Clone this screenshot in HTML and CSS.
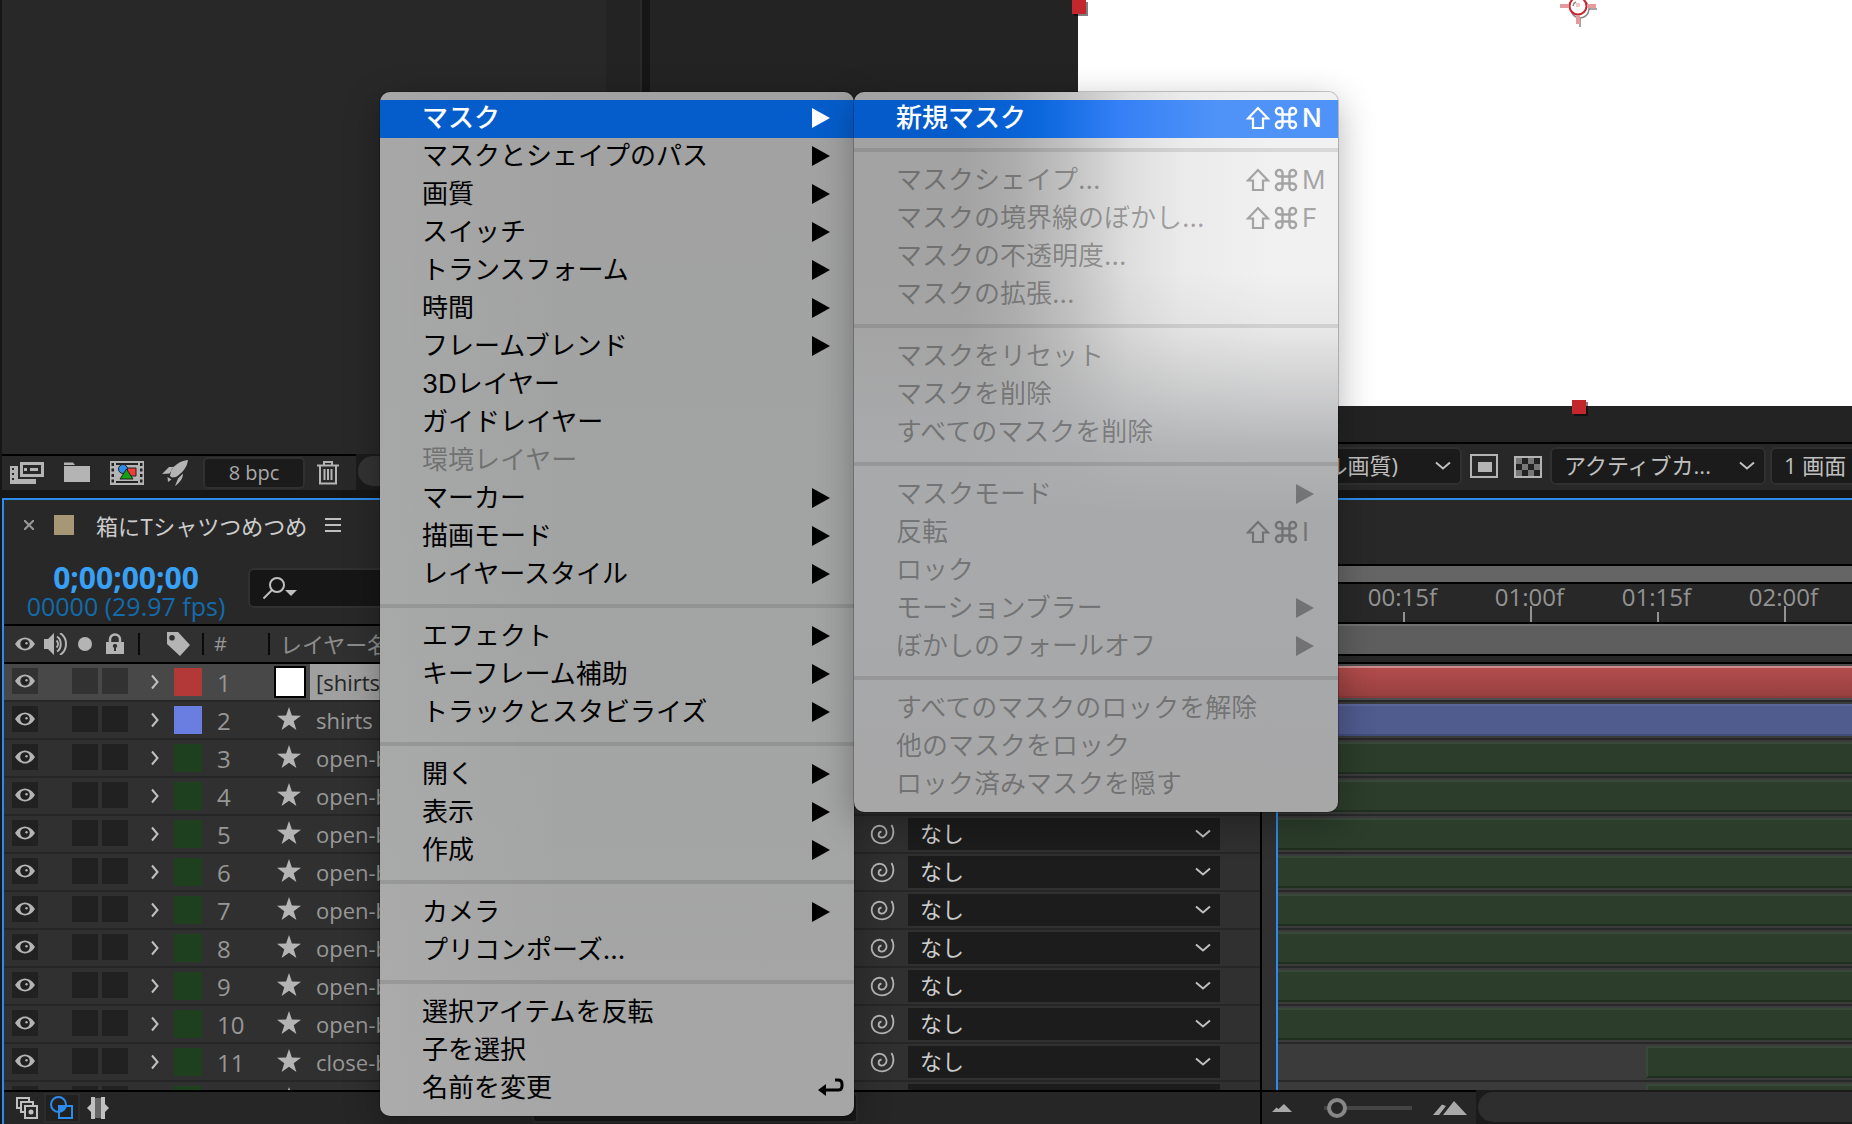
FILE: index.html
```html
<!DOCTYPE html>
<html lang="ja">
<head>
<meta charset="utf-8">
<title>箱にTシャツつめつめ</title>
<link rel="stylesheet" href="styles.css">
</head>
<body>
<svg class="defs" aria-hidden="true">
  <symbol id="eye" viewBox="0 0 22 14"><path fill="currentColor" fill-rule="evenodd" d="M1 7C4 2.500 7.500.5 11 .5S18 2.500 21 7c-3 4.500-6.500 6.500-10 6.500S4 11.500 1 7zm10-4.800a4.800 4.800 0 1 0 0 9.600 4.800 4.800 0 0 0 0-9.600z"/><circle cx="11" cy="7" r="3.400" fill="#202020"/><circle cx="12.500" cy="6.200" r="1.200" fill="currentColor"/></symbol>
  <symbol id="twirl" viewBox="0 0 10 16"><path d="M2 1.500 7.500 8 2 14.500" fill="none" stroke="currentColor" stroke-width="2"/></symbol>
  <symbol id="star" viewBox="0 0 24 24"><path fill="currentColor" d="M12 0l2.900 8.600L24 8.700l-7.300 5.500 2.700 8.800L12 17.700 4.600 23l2.700-8.800L0 8.700l9.100-.1z"/></symbol>
  <symbol id="whip" viewBox="0 0 26 22"><path d="M11.500 8.500c-3.500.5-4 5.500-.5 6 4.500.5 6.500-4 5-7.500C14 2 7.500 1.500 4 5c-4 4.500-2.500 11.500 2.500 14 6 3 13.500.5 16-5.500 1.500-4 1-8-1-11.500" fill="none" stroke="currentColor" stroke-width="1.800"/></symbol>
  <symbol id="next" viewBox="0 0 18 20"><path fill="currentColor" d="M0 0l18 10L0 20z"/></symbol>
  <symbol id="shift" viewBox="0 0 24 24"><path d="M12 2 2 12.500h5V22h10v-9.500h5z" fill="none" stroke="currentColor" stroke-width="2.200"/></symbol>
  <symbol id="cmd" viewBox="0 0 24 24"><path d="M8.500 8.500V5.300A3.300 3.300 0 1 0 5.200 8.500h13.600a3.300 3.300 0 1 0-3.300-3.200v13.400a3.300 3.300 0 1 0 3.300-3.200H5.200a3.300 3.300 0 1 0 3.300 3.200z" fill="none" stroke="currentColor" stroke-width="2.400"/></symbol>
</svg>

<div class="app">
  <div class="workspace">
    <section class="project" aria-label="プロジェクト">
      <div class="project-list"></div>
      <footer class="project-bar">
        <div class="project-tools">
          <button class="tool" aria-label="フッテージを変換"><svg width="34" height="24" viewBox="0 0 34 24"><path fill="#b4b4b4" fill-rule="evenodd" d="M10 1h24v15H10zm3 3v9h18V4zM14 7h3v3h-3zm6 0h8v3h-8zM0 5h8v13h18v5H0zm2 2v2h2V7zm0 5v2h2v-2zm0 5v2h2v-2z"/></svg></button>
          <button class="tool" aria-label="新規フォルダー"><svg width="26" height="24" viewBox="0 0 26 24"><path fill="#b4b4b4" d="M0 1.500h9L11 4H0zM0 5h26v16H0z"/></svg></button>
          <button class="tool film" aria-label="新規コンポジション"><svg width="34" height="24" viewBox="0 0 34 24"><path fill="#b4b4b4" d="M0 0h34v24H0z"/><path fill="#222" d="M1.500 2h2.500v3H1.500zm0 5.500h2.500v3H1.500zm0 5.500h2.500v3H1.500zm0 5.500h2.500v3H1.500zM30 2h2.500v3H30zm0 5.500h2.500v3H30zm0 5.500h2.500v3H30zm0 5.500h2.500v3H30zM6 2h22v2H6zm0 18h22v2H6z"/><path fill="#f33a3a" stroke="#222" d="M17 7h9v8h-9z"/><circle cx="13" cy="8" r="4.500" fill="#2d8ceb" stroke="#222"/><path fill="#13a013" stroke="#222" d="M16.500 8 23 18H10z"/></svg></button>
          <button class="tool rocket" aria-label="プロジェクト設定"><svg width="28" height="26" viewBox="0 0 28 26"><path fill="#b4b4b4" d="M27 0C19 1 13 5 10 11l-1 5 2 1.500 4-.5c6-4 11-9 12-17zM8 7c3 0 4 0 5-.500L8.500 13.500 1 14zm9 11.500 5-5c0 5-3 9-8 12.500zM6.500 17l4 2.500L7 22z"/></svg></button>
          <button class="depth">8 bpc</button>
          <button class="tool" aria-label="削除"><svg width="22" height="24" viewBox="0 0 22 24"><path d="M0 4.500h22M7 4V1h8v3M3 5v17.500h16V5M7.500 8v11M11 8v11M14.500 8v11" fill="none" stroke="#b4b4b4" stroke-width="2"/></svg></button>
        </div>
        <div class="project-scroll"><div class="thumb"></div></div>
      </footer>
    </section>

    <section class="viewer" aria-label="コンポジション">
      <div class="stage">
        <div class="canvas">
          <svg class="anchor" width="40" height="32" viewBox="0 0 40 32"><g fill="none" stroke="#888" stroke-width="1.500"><circle cx="22" cy="11" r="9"/><path d="M22 20v9M31 11h8"/></g><circle cx="20" cy="8" r="8.500" fill="#fff" stroke="#c8262d" stroke-width="2"/><path fill="#e59a9d" d="M18 17h4v9h-4zM2 6h9v4H2zm27 0h9v4h-9z"/><path fill="#f2c6c8" d="M18 5h4v4h-4z"/><path d="M15 8a5 5 0 0 1 3-4" fill="none" stroke="#888" stroke-width="1.500"/></svg>
          <span class="handle corner"></span>
          <span class="handle bottom"></span>
        </div>
      </div>
      <footer class="viewer-bar">
        <select class="box quality" aria-label="解像度"><option>(フル画質)</option></select>
        <button class="tool" aria-label="目標範囲"><svg width="28" height="24" viewBox="0 0 28 24"><path d="M1 1h26v22H1z" fill="none" stroke="#b4b4b4" stroke-width="2"/><path fill="#b4b4b4" d="M8 8h14v10H8z"/></svg></button>
        <button class="tool" aria-label="透明グリッド"><svg width="28" height="24" viewBox="0 0 28 24"><path d="M1 3h26v20H1z" fill="#222" stroke="#b4b4b4" stroke-width="2"/><path fill="#777" d="M2 4h6v6H2zm12 0h6v6h-6zM8 10h6v6H8zm12 0h6v6h-6zM2 16h6v6H2zm12 0h6v6h-6z"/></svg></button>
        <select class="box camera" aria-label="3Dビュー"><option>アクティブカ...</option></select>
        <select class="box views" aria-label="ビューレイアウト"><option>1 画面</option></select>
      </footer>
    </section>
  </div>

  <section class="timeline" aria-label="タイムライン">
    <div class="layers">
      <header class="comp-tab">
        <button class="tool" aria-label="閉じる"><svg width="10" height="10" viewBox="0 0 10 10"><path d="M0 0l10 10M10 0 0 10" stroke="#999" stroke-width="2"/></svg></button>
        <span class="comp-color"></span>
        <h1>箱にTシャツつめつめ</h1>
        <button class="tool" aria-label="パネルメニュー"><svg width="16" height="14" viewBox="0 0 16 14"><path d="M0 1h16M0 7h16M0 13h16" stroke="#c0c0c0" stroke-width="2"/></svg></button>
      </header>
      <div class="time-row">
        <div class="timecode"><strong>0;00;00;00</strong><span>00000 (29.97 fps)</span></div>
        <label class="search"><svg width="36" height="24" viewBox="0 0 36 24"><g fill="none" stroke="#c0c0c0" stroke-width="2"><circle cx="15" cy="9" r="7"/><path d="M10 14l-8.500 8.500"/></g><path fill="#c0c0c0" d="M23 14h12l-6 6z"/></svg><input type="search" aria-label="レイヤーを検索"></label>
      </div>
      <div class="layer-scroll">
      <table>
        <colgroup><col class="c-av"><col class="c-label"><col class="c-num"><col class="c-name"><col class="c-parent"></colgroup>
        <thead><tr>
          <th><div class="av"><svg width="22" height="14"><use href="#eye"/></svg><svg width="24" height="22" viewBox="0 0 24 22"><path fill="#b4b4b4" d="M0 6h4l6-6v22l-6-6H0z"/><path d="M12.500 7.500c2 2 2 5 0 7M13 3.500c5 3 5 12 0 15M16 0c8 5 8 17 0 22" fill="none" stroke="#b4b4b4" stroke-width="2"/></svg><svg width="14" height="14"><circle cx="7" cy="7" r="7" fill="#b4b4b4"/></svg><svg width="20" height="22" viewBox="0 0 20 22"><path d="M5 10V6.500a5 5 0 0 1 10 0V10" fill="none" stroke="#b4b4b4" stroke-width="2.500"/><path fill="#b4b4b4" d="M1 9h18v12H1z"/><path fill="#303030" d="M10 11a2 2 0 0 1 1 3.800V18H9v-3.200A2 2 0 0 1 10 11z"/></svg></div></th>
          <th><svg class="tag" width="24" height="24" viewBox="0 0 24 24"><path fill="#b4b4b4" fill-rule="evenodd" d="M1 0h11l12 13-10 11L1 12zm5 3a2.800 2.800 0 1 0 0 5.600A2.800 2.800 0 0 0 6 3z"/></svg></th>
          <th class="num">#</th>
          <th class="name-head">レイヤー名</th>
          <th></th>
        </tr></thead>
        <tbody>
          <tr class="selected"><td><div class="av"><i><svg width="22" height="14"><use href="#eye"/></svg></i><b></b><i></i><i></i></div></td><td><div class="label"><svg width="10" height="16"><use href="#twirl"/></svg><span class="chip red"></span></div></td><td class="num">1</td><td><div class="name"><span class="solid"></span><span class="edit">[shirts]</span></div></td><td></td></tr>
          <tr><td><div class="av"><i><svg width="22" height="14"><use href="#eye"/></svg></i><b></b><i></i><i></i></div></td><td><div class="label"><svg width="10" height="16"><use href="#twirl"/></svg><span class="chip blue"></span></div></td><td class="num">2</td><td><div class="name"><svg width="24" height="24"><use href="#star"/></svg><span>shirts</span></div></td><td></td></tr>
          <tr><td><div class="av"><i><svg width="22" height="14"><use href="#eye"/></svg></i><b></b><i></i><i></i></div></td><td><div class="label"><svg width="10" height="16"><use href="#twirl"/></svg><span class="chip"></span></div></td><td class="num">3</td><td><div class="name"><svg width="24" height="24"><use href="#star"/></svg><span>open-box</span></div></td><td></td></tr>
          <tr><td><div class="av"><i><svg width="22" height="14"><use href="#eye"/></svg></i><b></b><i></i><i></i></div></td><td><div class="label"><svg width="10" height="16"><use href="#twirl"/></svg><span class="chip"></span></div></td><td class="num">4</td><td><div class="name"><svg width="24" height="24"><use href="#star"/></svg><span>open-box</span></div></td><td></td></tr>
          <tr><td><div class="av"><i><svg width="22" height="14"><use href="#eye"/></svg></i><b></b><i></i><i></i></div></td><td><div class="label"><svg width="10" height="16"><use href="#twirl"/></svg><span class="chip"></span></div></td><td class="num">5</td><td><div class="name"><svg width="24" height="24"><use href="#star"/></svg><span>open-box</span></div></td><td><div class="parent"><svg width="26" height="22"><use href="#whip"/></svg><select aria-label="親 5"><option>なし</option></select></div></td></tr>
          <tr><td><div class="av"><i><svg width="22" height="14"><use href="#eye"/></svg></i><b></b><i></i><i></i></div></td><td><div class="label"><svg width="10" height="16"><use href="#twirl"/></svg><span class="chip"></span></div></td><td class="num">6</td><td><div class="name"><svg width="24" height="24"><use href="#star"/></svg><span>open-box</span></div></td><td><div class="parent"><svg width="26" height="22"><use href="#whip"/></svg><select aria-label="親 6"><option>なし</option></select></div></td></tr>
          <tr><td><div class="av"><i><svg width="22" height="14"><use href="#eye"/></svg></i><b></b><i></i><i></i></div></td><td><div class="label"><svg width="10" height="16"><use href="#twirl"/></svg><span class="chip"></span></div></td><td class="num">7</td><td><div class="name"><svg width="24" height="24"><use href="#star"/></svg><span>open-box</span></div></td><td><div class="parent"><svg width="26" height="22"><use href="#whip"/></svg><select aria-label="親 7"><option>なし</option></select></div></td></tr>
          <tr><td><div class="av"><i><svg width="22" height="14"><use href="#eye"/></svg></i><b></b><i></i><i></i></div></td><td><div class="label"><svg width="10" height="16"><use href="#twirl"/></svg><span class="chip"></span></div></td><td class="num">8</td><td><div class="name"><svg width="24" height="24"><use href="#star"/></svg><span>open-box</span></div></td><td><div class="parent"><svg width="26" height="22"><use href="#whip"/></svg><select aria-label="親 8"><option>なし</option></select></div></td></tr>
          <tr><td><div class="av"><i><svg width="22" height="14"><use href="#eye"/></svg></i><b></b><i></i><i></i></div></td><td><div class="label"><svg width="10" height="16"><use href="#twirl"/></svg><span class="chip"></span></div></td><td class="num">9</td><td><div class="name"><svg width="24" height="24"><use href="#star"/></svg><span>open-box</span></div></td><td><div class="parent"><svg width="26" height="22"><use href="#whip"/></svg><select aria-label="親 9"><option>なし</option></select></div></td></tr>
          <tr><td><div class="av"><i><svg width="22" height="14"><use href="#eye"/></svg></i><b></b><i></i><i></i></div></td><td><div class="label"><svg width="10" height="16"><use href="#twirl"/></svg><span class="chip"></span></div></td><td class="num">10</td><td><div class="name"><svg width="24" height="24"><use href="#star"/></svg><span>open-box</span></div></td><td><div class="parent"><svg width="26" height="22"><use href="#whip"/></svg><select aria-label="親 10"><option>なし</option></select></div></td></tr>
          <tr><td><div class="av"><i><svg width="22" height="14"><use href="#eye"/></svg></i><b></b><i></i><i></i></div></td><td><div class="label"><svg width="10" height="16"><use href="#twirl"/></svg><span class="chip"></span></div></td><td class="num">11</td><td><div class="name"><svg width="24" height="24"><use href="#star"/></svg><span>close-box</span></div></td><td><div class="parent"><svg width="26" height="22"><use href="#whip"/></svg><select aria-label="親 11"><option>なし</option></select></div></td></tr>
          <tr><td><div class="av"><i></i><b></b><i></i><i></i></div></td><td><div class="label"><svg width="10" height="16"></svg><span class="chip"></span></div></td><td class="num"></td><td><div class="name"><svg width="24" height="24"><use href="#star"/></svg></div></td><td><div class="parent"><svg width="26" height="22"><use href="#whip"/></svg><select aria-label="親 12"><option></option></select></div></td></tr>
        </tbody>
      </table>
      </div>
      <footer class="layer-foot">
        <button class="tool" aria-label="レイヤースイッチ"><svg width="22" height="22" viewBox="0 0 22 22"><path d="M4 11H1V1h12v3M8 15H5V5h12v3M9 9h12v12H9z" fill="none" stroke="#c0c0c0" stroke-width="2"/><circle cx="15" cy="15" r="2.500" fill="#c0c0c0"/></svg></button>
        <button class="tool on" aria-label="転送制御"><svg width="24" height="24" viewBox="0 0 24 24"><circle cx="8.500" cy="8.500" r="7.500" fill="none" stroke="#2d8ceb" stroke-width="2"/><path d="M9 10h13v12H9z" fill="none" stroke="#2d8ceb" stroke-width="2"/><path fill="#2d8ceb" d="M9 10h7a8 8 0 0 1-7 6z"/></svg></button>
        <button class="tool" aria-label="イン・アウト"><svg width="24" height="24" viewBox="0 0 24 24"><path fill="#666" d="M8 2h8v20H8z"/><path fill="#c0c0c0" d="M5 1h4v22H5v-7l-4-4 4-4zM15 1h4v7l4 4-4 4v7h-4z"/></svg></button>
        <button class="mode" aria-label="スイッチ / モード"></button>
      </footer>
    </div>

    <div class="graph">
      <div class="nav-space"></div>
      <div class="navigator"></div>
      <ol class="ruler"><li>00:15f</li><li class="sec">01:00f</li><li>01:15f</li><li class="sec">02:00f</li></ol>
      <div class="workarea"></div>
      <div class="cache"></div>
      <div class="tracks">
        <div class="track sel"><span class="bar red"></span></div>
        <div class="track"><span class="bar blue"></span></div>
        <div class="track"><span class="bar"></span></div>
        <div class="track"><span class="bar"></span></div>
        <div class="track"><span class="bar"></span></div>
        <div class="track"><span class="bar"></span></div>
        <div class="track"><span class="bar"></span></div>
        <div class="track"><span class="bar"></span></div>
        <div class="track"><span class="bar"></span></div>
        <div class="track"><span class="bar"></span></div>
        <div class="track"><span class="bar late"></span></div>
        <div class="track"><span class="bar late"></span></div>
        <span class="playhead"></span>
      </div>
      <footer class="zoom-foot">
        <div class="zoomer">
          <svg width="20" height="8" viewBox="0 0 20 8"><path fill="#a9a9a9" d="M0 8l4.500-4.500 2 1.500L12 0l8 8z"/></svg>
          <input type="range" min="0" max="100" value="4" aria-label="ズーム">
          <svg width="34" height="14" viewBox="0 0 34 14"><path fill="#a9a9a9" d="M0 14 9 3.500l4 1.500-7 9zM10 14 21 0l13 14z"/></svg>
        </div>
        <div class="hscroll"><div class="thumb"></div></div>
      </footer>
    </div>
  </section>
</div>

<div class="menus">
  <ul class="menu" role="menu">
    <li><button class="active" role="menuitem">マスク<svg><use href="#next"/></svg></button></li>
    <li><button role="menuitem">マスクとシェイプのパス<svg><use href="#next"/></svg></button></li>
    <li><button role="menuitem">画質<svg><use href="#next"/></svg></button></li>
    <li><button role="menuitem">スイッチ<svg><use href="#next"/></svg></button></li>
    <li><button role="menuitem">トランスフォーム<svg><use href="#next"/></svg></button></li>
    <li><button role="menuitem">時間<svg><use href="#next"/></svg></button></li>
    <li><button role="menuitem">フレームブレンド<svg><use href="#next"/></svg></button></li>
    <li><button role="menuitem">3Dレイヤー</button></li>
    <li><button role="menuitem">ガイドレイヤー</button></li>
    <li><button role="menuitem" disabled>環境レイヤー</button></li>
    <li><button role="menuitem">マーカー<svg><use href="#next"/></svg></button></li>
    <li><button role="menuitem">描画モード<svg><use href="#next"/></svg></button></li>
    <li><button role="menuitem">レイヤースタイル<svg><use href="#next"/></svg></button></li>
    <li class="sep" role="separator"></li>
    <li><button role="menuitem">エフェクト<svg><use href="#next"/></svg></button></li>
    <li><button role="menuitem">キーフレーム補助<svg><use href="#next"/></svg></button></li>
    <li><button role="menuitem">トラックとスタビライズ<svg><use href="#next"/></svg></button></li>
    <li class="sep" role="separator"></li>
    <li><button role="menuitem">開く<svg><use href="#next"/></svg></button></li>
    <li><button role="menuitem">表示<svg><use href="#next"/></svg></button></li>
    <li><button role="menuitem">作成<svg><use href="#next"/></svg></button></li>
    <li class="sep" role="separator"></li>
    <li><button role="menuitem">カメラ<svg><use href="#next"/></svg></button></li>
    <li><button role="menuitem">プリコンポーズ...</button></li>
    <li class="sep" role="separator"></li>
    <li><button role="menuitem">選択アイテムを反転</button></li>
    <li><button role="menuitem">子を選択</button></li>
    <li><button class="enter" role="menuitem">名前を変更<svg viewBox="0 0 26 20"><path d="M6 12h14q4 0 4-4V6q0-4-4-4h-3" fill="none" stroke="currentColor" stroke-width="3"/><path fill="currentColor" d="M0 12l8-6v12z"/></svg></button></li>
  </ul>
  <ul class="menu sub" role="menu">
    <li><button class="active" role="menuitem">新規マスク<kbd><svg><use href="#shift"/></svg><svg><use href="#cmd"/></svg>N</kbd></button></li>
    <li class="sep" role="separator"></li>
    <li><button role="menuitem" disabled>マスクシェイプ...<kbd><svg><use href="#shift"/></svg><svg><use href="#cmd"/></svg>M</kbd></button></li>
    <li><button role="menuitem" disabled>マスクの境界線のぼかし...<kbd><svg><use href="#shift"/></svg><svg><use href="#cmd"/></svg>F</kbd></button></li>
    <li><button role="menuitem" disabled>マスクの不透明度...</button></li>
    <li><button role="menuitem" disabled>マスクの拡張...</button></li>
    <li class="sep" role="separator"></li>
    <li><button role="menuitem" disabled>マスクをリセット</button></li>
    <li><button role="menuitem" disabled>マスクを削除</button></li>
    <li><button role="menuitem" disabled>すべてのマスクを削除</button></li>
    <li class="sep" role="separator"></li>
    <li><button role="menuitem" disabled>マスクモード<svg><use href="#next"/></svg></button></li>
    <li><button role="menuitem" disabled>反転<kbd><svg><use href="#shift"/></svg><svg><use href="#cmd"/></svg>I</kbd></button></li>
    <li><button role="menuitem" disabled>ロック</button></li>
    <li><button role="menuitem" disabled>モーションブラー<svg><use href="#next"/></svg></button></li>
    <li><button role="menuitem" disabled>ぼかしのフォールオフ<svg><use href="#next"/></svg></button></li>
    <li class="sep" role="separator"></li>
    <li><button role="menuitem" disabled>すべてのマスクのロックを解除</button></li>
    <li><button role="menuitem" disabled>他のマスクをロック</button></li>
    <li><button role="menuitem" disabled>ロック済みマスクを隠す</button></li>
  </ul>
</div>
</body>
</html>
```
FILE: styles.css
```css
* { box-sizing: border-box; }

body {
  margin: 0;
  background: #161616;
  color: #c0c0c0;
  font: 22px/28px "Open Sans", "Noto Sans CJK JP", sans-serif;
  overflow: hidden;
}

button, input, select { margin: 0; padding: 0; border: 0; background: none; color: inherit; font: inherit; }
ul, ol { margin: 0; padding: 0; list-style: none; }
svg { display: block; flex: none; }
.defs { position: absolute; width: 0; height: 0; }
.tool { display: flex; align-items: center; flex: none; }

select {
  appearance: none;
  padding-bottom: 2px;
  background: #1c1c1c url("data:image/svg+xml,%3Csvg xmlns='http://www.w3.org/2000/svg' width='16' height='10'%3E%3Cpath d='M1 1.500l7 6 7-6' fill='none' stroke='%23c0c0c0' stroke-width='2'/%3E%3C/svg%3E") no-repeat right 9px center;
}

.app {
  display: grid;
  grid-template-rows: 490fr 626fr;
  gap: 8px;
  height: 100vh;
  padding-left: 2px;
}

/* upper panels */
.workspace { display: grid; grid-template-columns: 640px 1fr; gap: 8px; min-height: 0; }
.project { display: flex; flex-direction: column; background: #282828; border-right: 2px solid #2a2a2a; }
.project-list { flex: 1; border-right: 34px solid #232323; }
.project-bar { display: flex; height: 36px; }
.project-tools { display: flex; flex: none; align-items: center; width: 354px; padding-left: 8px; border-top: 2px solid #000; }
.project-tools .tool { margin-right: 20px; }
.project-tools .film { margin-right: 17px; }
.project-tools .rocket { margin-right: 14px; }
.depth { flex: none; width: 102px; height: 32px; margin-right: 12px; border: 2px solid #303030; border-radius: 5px; background: #1b1b1b; color: #a8a8a8; font-size: 20px; line-height: 28px; }
.project-tools .tool:last-child { margin-right: 0; }
.project-scroll { flex: 1; padding: 2px; background: #1b1b1b; }
.project-scroll .thumb { height: 30px; border-radius: 15px; background: #333; }

.viewer { display: flex; flex-direction: column; background: #232323; min-width: 0; }
.stage { flex: 1; padding: 0 0 36px 428px; }
.canvas { position: relative; height: 100%; background: #fff; }
.handle { position: absolute; width: 14px; height: 14px; background: #c4262e; box-shadow: 2px 2px 0 rgba(0, 0, 0, .5); }
.handle.corner { left: -6px; top: 0; }
.handle.bottom { left: 494px; bottom: -8px; }
.anchor { position: absolute; left: 480px; top: -2px; }
.viewer-bar { display: flex; align-items: center; height: 48px; padding: 0 0 2px 550px; border-top: 2px solid #000; background: #282828; overflow: hidden; }
.box { flex: none; height: 38px; border: 2px solid #303030; border-radius: 6px; background-color: #1b1b1b; }
.quality { width: 262px; padding-left: 95px; margin-right: 8px; }
.viewer-bar .tool { margin-right: 16px; }
.viewer-bar .tool + .tool { margin-right: 8px; }
.camera { width: 216px; padding-left: 12px; margin-right: 4px; }
.views { width: 180px; padding-left: 12px; }

/* timeline: layer side */
.timeline { display: grid; grid-template-columns: 1260px 1fr; min-height: 0; border: solid #2d8ceb; border-width: 2px 0 0 2px; background: #282828; }
.layers { display: flex; flex-direction: column; min-height: 0; min-width: 0; border-right: 2px solid #000; margin-right: 2px; }
.comp-tab { display: flex; align-items: center; height: 50px; padding-left: 20px; }
.comp-color { width: 20px; height: 20px; margin: 0 20px; background: #a89777; }
.comp-tab h1 { margin: 0 18px 0 2px; font: 22px/28px "Noto Sans CJK JP", sans-serif; color: #ccc; }
.time-row { display: flex; align-items: flex-start; height: 74px; padding: 12px 0 0 20px; }
.timecode { display: flex; flex-direction: column; align-items: center; width: 204px; margin-right: 20px; white-space: nowrap; }
.timecode strong { color: #38a0f5; font-size: 30px; font-weight: 700; line-height: 32px; }
.timecode span { color: #136bac; font-size: 25px; line-height: 24px; }
.search { display: flex; align-items: center; gap: 8px; width: 400px; height: 40px; margin-top: 6px; padding-left: 12px; border: 2px solid #303030; border-radius: 6px; background: #161616; }
.search input { flex: 1; min-width: 0; }

.layer-scroll { flex: 1; min-height: 0; overflow: hidden; border-top: 2px solid #000; border-bottom: 2px solid #000; }
table { width: 100%; table-layout: fixed; border-collapse: separate; border-spacing: 0; }
.c-av { width: 136px; }
.c-label { width: 64px; }
.c-num { width: 66px; }
.c-name { width: 584px; }
th, td { height: 38px; padding: 0; overflow: hidden; border-bottom: 2px solid #262626; background: #303030; text-align: left; }
th { border-bottom-color: #000; font-weight: 400; color: #8c8c8c; background: #303030 linear-gradient(#0a0a0a, #0a0a0a) no-repeat right center / 2px 22px; }
th:nth-child(n+4) { background-image: none; }
.av { display: flex; align-items: center; gap: 4px; height: 36px; padding: 0 0 2px 8px; color: #b4b4b4; }
.av > i, .av > b { display: grid; place-items: center; width: 26px; height: 26px; }
.av > i { background: #212121; }
th .av { gap: 8px; padding: 0 0 0 10px; }
th .av svg:nth-child(3) { margin: 0 5px 0 2px; }
.label { display: flex; align-items: center; gap: 14px; padding-left: 10px; color: #c0c0c0; }
.tag { margin-left: 26px; }
.chip { width: 28px; height: 28px; background: #1e401f; }
.chip.red { background: #b33838; }
.chip.blue { background: #6a7ee2; }
.num { padding: 2px 0 0 13px; color: #979797; font-size: 24px; line-height: 28px; }
th.num { padding: 0 0 0 10px; font-size: 20px; }
.name-head { padding-left: 10px; }
.name { display: flex; align-items: center; height: 36px; padding-left: 4px; color: #999; font-weight: 500; }
.name > svg { margin: 0 9px 2px 3px; color: #b4b4b4; }
.name span:last-child { padding-left: 6px; line-height: 38px; }
.name .solid { width: 32px; height: 32px; margin-right: 4px; border: 2px solid #000; background: #fff; }
.name .edit { flex: 1; background: #a0a0a0; color: #262626; }
.selected td { background: #484848; }
.selected .av > i { background: #323232; }
.parent { display: flex; align-items: center; gap: 12px; padding-left: 16px; color: #b4b4b4; }
.parent select { width: 312px; height: 32px; padding-left: 12px; color: #ccc; }

.layer-foot { display: flex; align-items: center; height: 32px; padding-left: 12px; background: #262626; }
.layer-foot .on { height: 30px; margin: 0 6px; padding: 0 4px; border: 2px solid #2c2c2c; background: #212121; }
.mode { width: 326px; height: 30px; margin-left: 422px; border: 2px solid #2c2c2c; border-radius: 4px; background: #181818; }

/* timeline: time graph */
.graph { display: flex; flex-direction: column; min-width: 0; min-height: 0; margin-left: -2px; }
.nav-space { height: 66px; border-bottom: 2px solid #000; }
.navigator { height: 18px; border-bottom: 2px solid #000; background: #656565; }
.ruler { display: flex; height: 40px; padding-left: 77px; border-bottom: 2px solid #000; color: #939393; font-size: 24px; line-height: 26px; }
.ruler li { position: relative; flex: none; width: 127px; text-align: center; }
.ruler li::after { content: ""; position: absolute; left: 64px; bottom: 0; width: 2px; height: 10px; background: #939393; }
.ruler li.sec::after { height: 16px; }
.workarea { height: 32px; border-top: 2px solid #707070; border-bottom: 2px solid #000; background: #5e5e5e; }
.cache { height: 8px; border-bottom: 2px solid #000; }
.tracks { position: relative; flex: 1; min-height: 0; overflow: hidden; padding-left: 14px; background: linear-gradient(90deg, #303030 14px, #3b3b3b 14px); }
.track { height: 38px; padding: 2px 0; border-bottom: 2px solid #282828; }
.track.sel { background: #4e4e4e; }
.bar { display: block; height: 32px; border-top: 2px solid #38493a; border-bottom: 2px solid #20301f; background: #2c3d2b; }
.bar.blue { border-top-color: #5b6698; border-bottom-color: #434d7c; background: #505b8e; }
.bar.red { border-top-color: #cf8c8e; border-bottom-color: #8a3a3a; background: linear-gradient(#b34c4c, #984040); }
.bar.late { margin-left: 370px; border-left: 2px solid #38493a; }
.playhead { position: absolute; left: 14px; top: 0; bottom: 0; width: 2px; background: #2d8ceb; }
.zoom-foot { display: flex; height: 34px; }
.zoomer { display: flex; align-items: center; width: 214px; padding-left: 10px; border-top: 2px solid #000; background: #262626; }
.zoomer input { appearance: none; width: 88px; height: 20px; margin: 0 21px 0 32px; background: linear-gradient(#444, #444) no-repeat center / 100% 4px; }
.zoomer input::-webkit-slider-thumb { appearance: none; width: 20px; height: 20px; border: 4px solid #878787; border-radius: 50%; background: #262626; }
.hscroll { flex: 1; padding: 2px 0 2px 2px; background: #1b1b1b; }
.hscroll .thumb { height: 30px; border-radius: 15px 0 0 15px; background: #2e2e2e; }

/* context menus */
.menus { position: absolute; left: 380px; top: 92px; display: flex; align-items: flex-start; }
.menu {
  width: 474px;
  padding: 8px 0;
  border-radius: 10px;
  background: linear-gradient(90deg, rgba(255, 255, 255, .06), transparent 40%), linear-gradient(#a2a2a2, #a2a3a3 45%, #a6a6a6);
  box-shadow: 0 0 0 1px rgba(0, 0, 0, .2), 0 10px 36px rgba(0, 0, 0, .3);
  color: #000;
  font: 26px/38px Inter, "Noto Sans CJK JP", sans-serif;
}
.menu.sub {
  width: 484px;
  background:
    linear-gradient(transparent 180px, rgba(170, 171, 173, .15) 240px, rgba(170, 171, 173, .5) 300px, rgba(170, 171, 173, .85) 355px, #a8a9ab 420px, #a8a9ab 470px, #a7a7a8),
    linear-gradient(90deg, #a3a3a3 110px, #adadad 160px, #c2c2c2 215px, #dedede 275px, #ebebeb 330px, #f1f1f1 420px);
}
.menu button { display: flex; align-items: center; justify-content: space-between; width: 100%; height: 38px; padding: 0 24px 2px 42px; text-align: left; white-space: nowrap; }
.menu button > svg { width: 18px; height: 20px; }
.menu button.enter { padding-right: 10px; }
.menu .enter > svg { width: 26px; }
.menu button.active { background: #055dcb; color: #fff; font-weight: 500; }
.menu.sub .active { background: linear-gradient(90deg, #055bc9 20%, #0a66dc 38%, #3580f6 55%, #4f93f8 75%); }
.menu button:disabled { color: rgba(0, 0, 0, .32); }
.sep { height: 4px; margin: 10px 0; background: rgba(0, 0, 0, .1); }
kbd { display: flex; align-items: center; width: 68px; margin-left: auto; font: inherit; }
.menu kbd svg { width: 24px; height: 24px; margin-right: 4px; }
```
